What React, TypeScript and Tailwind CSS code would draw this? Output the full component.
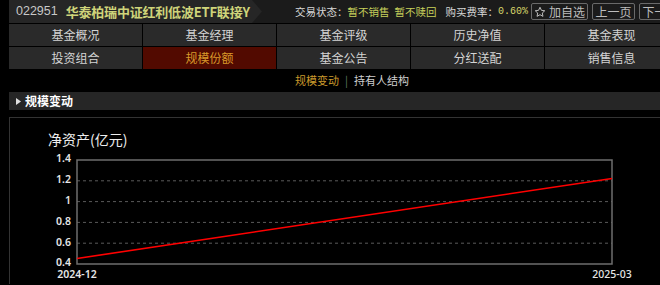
import React from "react";

const tabs1 = ["基金概况", "基金经理", "基金评级", "历史净值", "基金表现"];
const tabs2 = ["投资组合", "规模份额", "基金公告", "分红送配", "销售信息"];

const F = { fontFamily: '"Noto Sans CJK SC", "Noto Sans", sans-serif' };

function Chart() {
  const x0 = 67, x1 = 602, yTop = 11, yBot = 115;
  const ys = [1.4, 1.2, 1, 0.8, 0.6, 0.4];
  const yOf = (v: number) => yBot - ((v - 0.4) / 1.0) * (yBot - yTop);
  return (
    <svg width="650" height="135" className="block">
      {ys.slice(1, 5).map((v) => (
        <line key={v} x1={x0} x2={x1} y1={yOf(v)} y2={yOf(v)} stroke="#5a5a5a" strokeWidth="1" strokeDasharray="3 3" />
      ))}
      <rect x={x0} y={yTop} width={x1 - x0} height={yBot - yTop} fill="none" stroke="#6e6e6e" strokeWidth="1.5" />
      {ys.map((v) => (
        <text key={v} x={61} y={yOf(v) - 0.5} textAnchor="end" dominantBaseline="middle" fill="#e6e6e6" fontSize="10.5" fontWeight="600" fontFamily='"Noto Sans", sans-serif'>
          {v}
        </text>
      ))}
      <line x1={x0} y1={yOf(0.453)} x2={x1} y2={yOf(1.222)} stroke="#ff0000" strokeWidth="1.6" />
      <text x={67} y={126.5} textAnchor="middle" dominantBaseline="middle" fill="#e6e6e6" fontSize="10.5" fontWeight="600" fontFamily='"Noto Sans", sans-serif'>2024-12</text>
      <text x={602} y={126.5} textAnchor="middle" dominantBaseline="middle" fill="#e6e6e6" fontSize="10.5" fontWeight="500" fontFamily='"Noto Sans", sans-serif'>2025-03</text>
    </svg>
  );
}

export default function App() {
  return (
    <div className="w-[660px] h-[285px] bg-black overflow-hidden pl-[9px]" style={F}>
      {/* header */}
      <div className="h-[23px] flex items-center bg-[#1b1b1b] w-[700px] whitespace-nowrap">
        <div className="h-full w-[253px] shrink-0 flex items-center bg-[#262626] pl-[7px] [clip-path:polygon(0_0,calc(100%-10px)_0,100%_50%,calc(100%-10px)_100%,0_100%)]">
          <span className="text-[12.5px] text-[#c8c8c8]" style={{ fontFamily: '"Liberation Sans", sans-serif' }}>022951</span>
          <span className="ml-[8px] text-[13px] font-bold text-[#cfd47a] leading-none tracking-[-0.2px]" style={{ fontFamily: '"Noto Sans CJK SC", "Liberation Serif", serif' }}>华泰柏瑞中证红利低波ETF联接Y</span>
        </div>
        <div className="flex items-center text-[10.5px] ml-[33px] w-[236px] shrink-0">
          <span className="text-[#d8d8d8]">交易状态：</span>
          <span className="text-[#c7d15c]">暂不销售</span>
          <span className="text-[#c7d15c] ml-[5px]">暂不赎回</span>
          <span className="text-[#d8d8d8] ml-[9px]">购买费率：</span>
          <span className="text-[#d6d66a] text-[10px]" style={{ fontFamily: '"Liberation Mono", monospace' }}>0.60%</span>
        </div>
        <div className="flex items-center gap-[4px] text-[12px] text-[#bdbdbd] shrink-0">
          <div className="h-[17px] w-[57px] border border-[#6a6a6a] rounded-[2px] flex items-center justify-center gap-[3px]">
            <svg width="12" height="12" viewBox="0 0 24 24" fill="none" stroke="#bdbdbd" strokeWidth="2"><polygon points="12,2.5 14.9,8.7 21.5,9.5 16.6,14 17.9,20.7 12,17.4 6.1,20.7 7.4,14 2.5,9.5 9.1,8.7" /></svg>
            <span>加自选</span>
          </div>
          <div className="h-[17px] w-[43px] border border-[#6a6a6a] rounded-[2px] flex items-center justify-center">上一页</div>
          <div className="h-[17px] w-[43px] border border-[#6a6a6a] rounded-[2px] flex items-center justify-center">下一页</div>
        </div>
      </div>
      {/* tabs */}
      <div className="grid grid-cols-[repeat(5,133px)] gap-px w-[672px] bg-black pt-px">
        {tabs1.map((t) => (
          <div key={t} className="h-[22px] bg-[#2a2a2a] text-[#d4d4d4] text-[12px] flex items-center justify-center">{t}</div>
        ))}
        {tabs2.map((t) => (
          <div key={t} className={`h-[22px] text-[12px] flex items-center justify-center ${t === "规模份额" ? "bg-[#520a00] text-[#d9992a]" : "bg-[#2a2a2a] text-[#d4d4d4]"}`}>{t}</div>
        ))}
      </div>
      {/* sub tabs */}
      <div className="h-[23px] flex items-center justify-center text-[11px] pl-[35px]">
        <span className="text-[#c99a2c]">规模变动</span>
        <span className="mx-[6px] text-[#5f7a66]">|</span>
        <span className="text-[#cfcfcf]">持有人结构</span>
      </div>
      {/* section bar */}
      <div className="h-[18px] bg-[#262626] flex items-center pl-[7px]">
        <svg width="5" height="7" viewBox="0 0 5 7"><polygon points="0,0 5,3.5 0,7" fill="#e0e0e0" /></svg>
        <span className="ml-[4px] text-[12px] font-bold text-white">规模变动</span>
      </div>
      {/* chart panel */}
      <div className="mt-[7px] border-t border-l border-[#333333]">
        <div className="pt-[11px] pl-[38px] h-[31px] text-[14px] leading-[20px] text-[#eeeeee]">净资产(亿元)</div>
        <Chart />
      </div>
    </div>
  );
}
